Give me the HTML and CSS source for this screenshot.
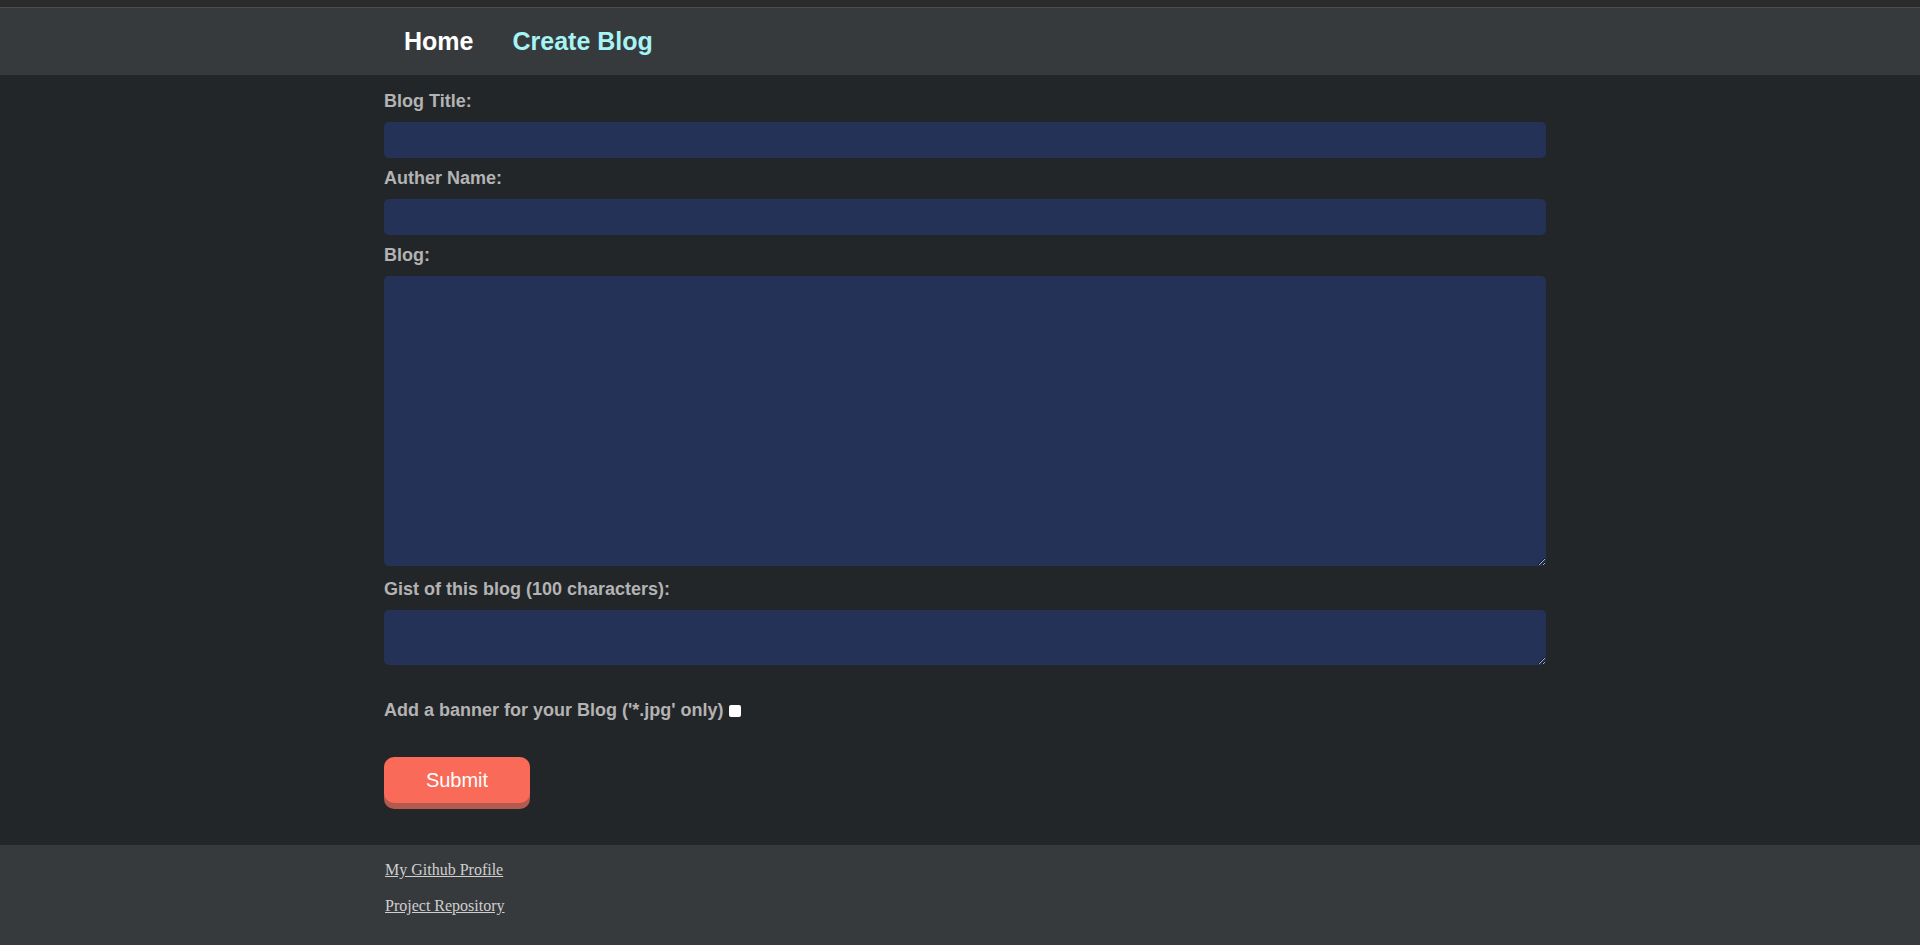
FILE: index.html
```html
<!DOCTYPE html>
<html lang="en">
<head>
<meta charset="utf-8">
<title>Create Blog</title>
<link rel="stylesheet" href="styles.css">
</head>
<body>
<div class="topstrip"></div>
<nav class="nav">
  <div class="wrap nav-inner">
    <a class="nav-link home" href="#">Home</a>
    <a class="nav-link active" href="#">Create Blog</a>
  </div>
</nav>
<main class="wrap form">
  <label class="lbl" for="title">Blog Title:</label>
  <input class="field" id="title" type="text">
  <label class="lbl" for="author">Auther Name:</label>
  <input class="field" id="author" type="text">
  <label class="lbl" for="blog">Blog:</label>
  <textarea class="field area-big" id="blog"></textarea>
  <label class="lbl lbl-gist" for="gist">Gist of this blog (100 characters):</label>
  <textarea class="field area-small" id="gist"></textarea>
  <div class="banner-row">
    <label class="lbl" for="banner">Add a banner for your Blog ('*.jpg' only)</label>
    <input class="check" id="banner" type="checkbox">
  </div>
  <div class="submit-row">
    <button class="submit" type="button">Submit</button>
  </div>
</main>
<footer class="footer">
  <div class="wrap foot-wrap">
    <p class="foot-p"><a class="foot-link" href="#">My Github Profile</a></p>
    <p class="foot-p"><a class="foot-link" href="#">Project Repository</a></p>
  </div>
</footer>
</body>
</html>
```
FILE: styles.css
```css
html, body {
  margin: 0;
  padding: 0;
}
body {
  background: #232629;
  font-family: "Liberation Sans", Arial, sans-serif;
  min-height: 100vh;
  display: flex;
  flex-direction: column;
}
.wrap {
  width: 1152px;
  margin: 0 auto;
}
.topstrip {
  height: 7px;
  background: #2b2b2b;
  border-bottom: 1px solid #4d4d4d;
}
.nav {
  background: #373a3d;
  height: 67px;
}
.nav-inner {
  display: flex;
  align-items: center;
  height: 100%;
}
.nav-link {
  font-size: 25px;
  font-weight: bold;
  text-decoration: none;
  padding: 0 19px 0 20px;
  color: #ffffff;
}
.nav-link.active {
  color: #a6f4f4;
}
.form {
  display: flex;
  flex-direction: column;
  padding: 16px 0 42px;
}
.lbl {
  color: #b3b3b3;
  font-size: 18px;
  font-weight: bold;
  line-height: 21px;
  display: block;
}
.field {
  display: block;
  box-sizing: border-box;
  width: 1162px;
  border: none;
  outline: none;
  border-radius: 5px;
  background: #253258;
  color: #ffffff;
  margin: 10px 0;
  padding: 4px 6px;
  font-family: "Liberation Sans", Arial, sans-serif;
  font-size: 16px;
}
input.field {
  height: 36px;
}
.area-big {
  height: 290px;
  resize: vertical;
  margin-bottom: 13px;
}
.area-small {
  height: 55px;
  resize: vertical;
  margin-bottom: 35px;
}
.banner-row {
  display: flex;
  align-items: center;
  height: 21px;
}
.check {
  appearance: none;
  -webkit-appearance: none;
  width: 12px;
  height: 12px;
  margin: 0 0 0 5px;
  background: #ffffff;
  border-radius: 2px;
  border: none;
}
.submit-row {
  margin-top: 36px;
}
.submit {
  width: 146px;
  height: 46px;
  border: none;
  border-radius: 10px;
  background: #fa6a58;
  color: #ffffff;
  font-family: "Liberation Sans", Arial, sans-serif;
  font-size: 20px;
  box-shadow: 0 6px 0 #b35a4e;
  cursor: pointer;
}
.footer {
  background: #373a3d;
  flex: 1;
  padding: 15px 0 16px;
}
.foot-wrap {
  padding-left: 1px;
  box-sizing: border-box;
}
.foot-p {
  margin: 0 0 16px;
  font-family: "Liberation Serif", "Times New Roman", serif;
  font-size: 16px;
  line-height: 20px;
}
.foot-p:last-child {
  margin-bottom: 0;
}
.foot-link {
  color: #cfcfcf;
  text-decoration: underline;
}
```
